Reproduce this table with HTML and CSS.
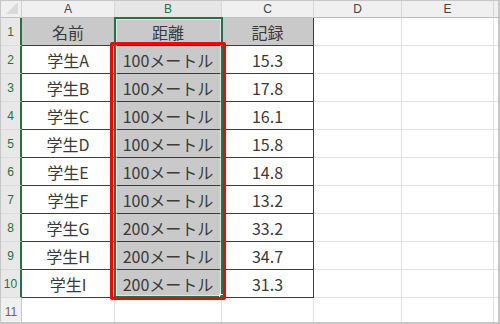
FILE: index.html
```html
<!DOCTYPE html>
<html lang="ja">
<head>
<meta charset="utf-8">
<link rel="stylesheet" href="styles.css">
</head>
<body>
<div class="frame">
  <div class="sheet">
    <div class="corner"><span class="tri"></span></div>
    <div class="ch">A</div>
    <div class="ch sel">B</div>
    <div class="ch">C</div>
    <div class="ch">D</div>
    <div class="ch">E</div>
    <div class="ch last"></div>

    <div class="rh sel">1</div>
    <div class="c t fill tl">名前</div>
    <div class="c t fill">距離</div>
    <div class="c t fill tr">記録</div>
    <div class="c"></div><div class="c"></div><div class="c last"></div>

    <div class="rh sel">2</div>
    <div class="c t tl">学生A</div><div class="c t fill">100メートル</div><div class="c t tr">15.3</div>
    <div class="c"></div><div class="c"></div><div class="c last"></div>

    <div class="rh sel">3</div>
    <div class="c t tl">学生B</div><div class="c t fill">100メートル</div><div class="c t tr">17.8</div>
    <div class="c"></div><div class="c"></div><div class="c last"></div>

    <div class="rh sel">4</div>
    <div class="c t tl">学生C</div><div class="c t fill">100メートル</div><div class="c t tr">16.1</div>
    <div class="c"></div><div class="c"></div><div class="c last"></div>

    <div class="rh sel">5</div>
    <div class="c t tl">学生D</div><div class="c t fill">100メートル</div><div class="c t tr">15.8</div>
    <div class="c"></div><div class="c"></div><div class="c last"></div>

    <div class="rh sel">6</div>
    <div class="c t tl">学生E</div><div class="c t fill">100メートル</div><div class="c t tr">14.8</div>
    <div class="c"></div><div class="c"></div><div class="c last"></div>

    <div class="rh sel">7</div>
    <div class="c t tl">学生F</div><div class="c t fill">100メートル</div><div class="c t tr">13.2</div>
    <div class="c"></div><div class="c"></div><div class="c last"></div>

    <div class="rh sel">8</div>
    <div class="c t tl">学生G</div><div class="c t fill">200メートル</div><div class="c t tr">33.2</div>
    <div class="c"></div><div class="c"></div><div class="c last"></div>

    <div class="rh sel">9</div>
    <div class="c t tl">学生H</div><div class="c t fill">200メートル</div><div class="c t tr">34.7</div>
    <div class="c"></div><div class="c"></div><div class="c last"></div>

    <div class="rh sel">10</div>
    <div class="c t tl">学生I</div><div class="c t fill">200メートル</div><div class="c t tr">31.3</div>
    <div class="c"></div><div class="c"></div><div class="c last"></div>

    <div class="rh">11</div>
    <div class="c"></div><div class="c"></div><div class="c"></div>
    <div class="c"></div><div class="c"></div><div class="c last"></div>

    <div class="selection"><span class="handle"></span></div>
    <div class="redbox"></div>
  </div>
</div>
</body>
</html>
```

FILE: styles.css
```css
* { box-sizing: border-box; }
html, body { margin: 0; padding: 0; background: #fff; }
.frame {
  width: 500px;
  height: 324px;
  border: 1px solid #c6c6c6;
  border-right-width: 2px;
  border-bottom-width: 2px;
  overflow: hidden;
  font-family: "Noto Sans CJK JP", "Noto Sans", sans-serif;
}
.sheet {
  position: relative;
  display: grid;
  grid-template-columns: 21px 93px 107px 92px 88px 92px 10px;
  grid-template-rows: 17px repeat(11, 28px);
}
.corner {
  position: relative;
  background: #f0f0f0;
  border-right: 1px solid #d0d0d0;
  border-bottom: 1px solid #c0c0c0;
}
.tri {
  position: absolute;
  right: 3px;
  bottom: 3px;
  width: 0;
  height: 0;
  border-left: 12px solid transparent;
  border-bottom: 12px solid #dadada;
}
.ch {
  background: #f0f0f0;
  border-right: 1px solid #d8d8d8;
  border-bottom: 1px solid #bdbdbd;
  color: #444;
  font-size: 12px;
  display: flex;
  align-items: center;
  justify-content: center;
  font-family: "Liberation Sans", "Noto Sans", sans-serif;
}
.ch.sel {
  background: #e6e6e6;
  color: #217346;
}
.rh {
  background: #f0f0f0;
  border-right: 1px solid #c8c8c8;
  border-bottom: 1px solid #dcdcdc;
  color: #666;
  font-size: 12px;
  display: flex;
  align-items: center;
  justify-content: center;
  font-family: "Liberation Sans", "Noto Sans", sans-serif;
}
.rh.sel {
  background: #e8e8e8;
  color: #217346;
  border-right: 2px solid #217346;
}
.c {
  border-right: 1px solid #e1e1e1;
  border-bottom: 1px solid #e1e1e1;
  font-size: 16px;
  color: #3a3a3a;
  display: flex;
  align-items: center;
  justify-content: center;
}
.c.t {
  border-right-color: #3c3c3c;
  border-bottom-color: #3c3c3c;
}
.c.fill { background: #c9c9c9; }
.selection {
  position: absolute;
  left: 113px;
  top: 16px;
  width: 109px;
  height: 281px;
  border: 2px solid #217346;
  pointer-events: none;
}
.selection::after {
  content: "";
  position: absolute;
  inset: 0;
  border: 1px solid #fff;
  opacity: 0.5;
}
.handle {
  position: absolute;
  right: -3px;
  bottom: -3px;
  width: 5px;
  height: 5px;
  background: #217346;
  border: 1px solid #fff;
}
.redbox {
  position: absolute;
  left: 109px;
  top: 41px;
  width: 116px;
  height: 258px;
  border: 3px solid #ff0000;
  border-radius: 2px;
  pointer-events: none;
}
```
